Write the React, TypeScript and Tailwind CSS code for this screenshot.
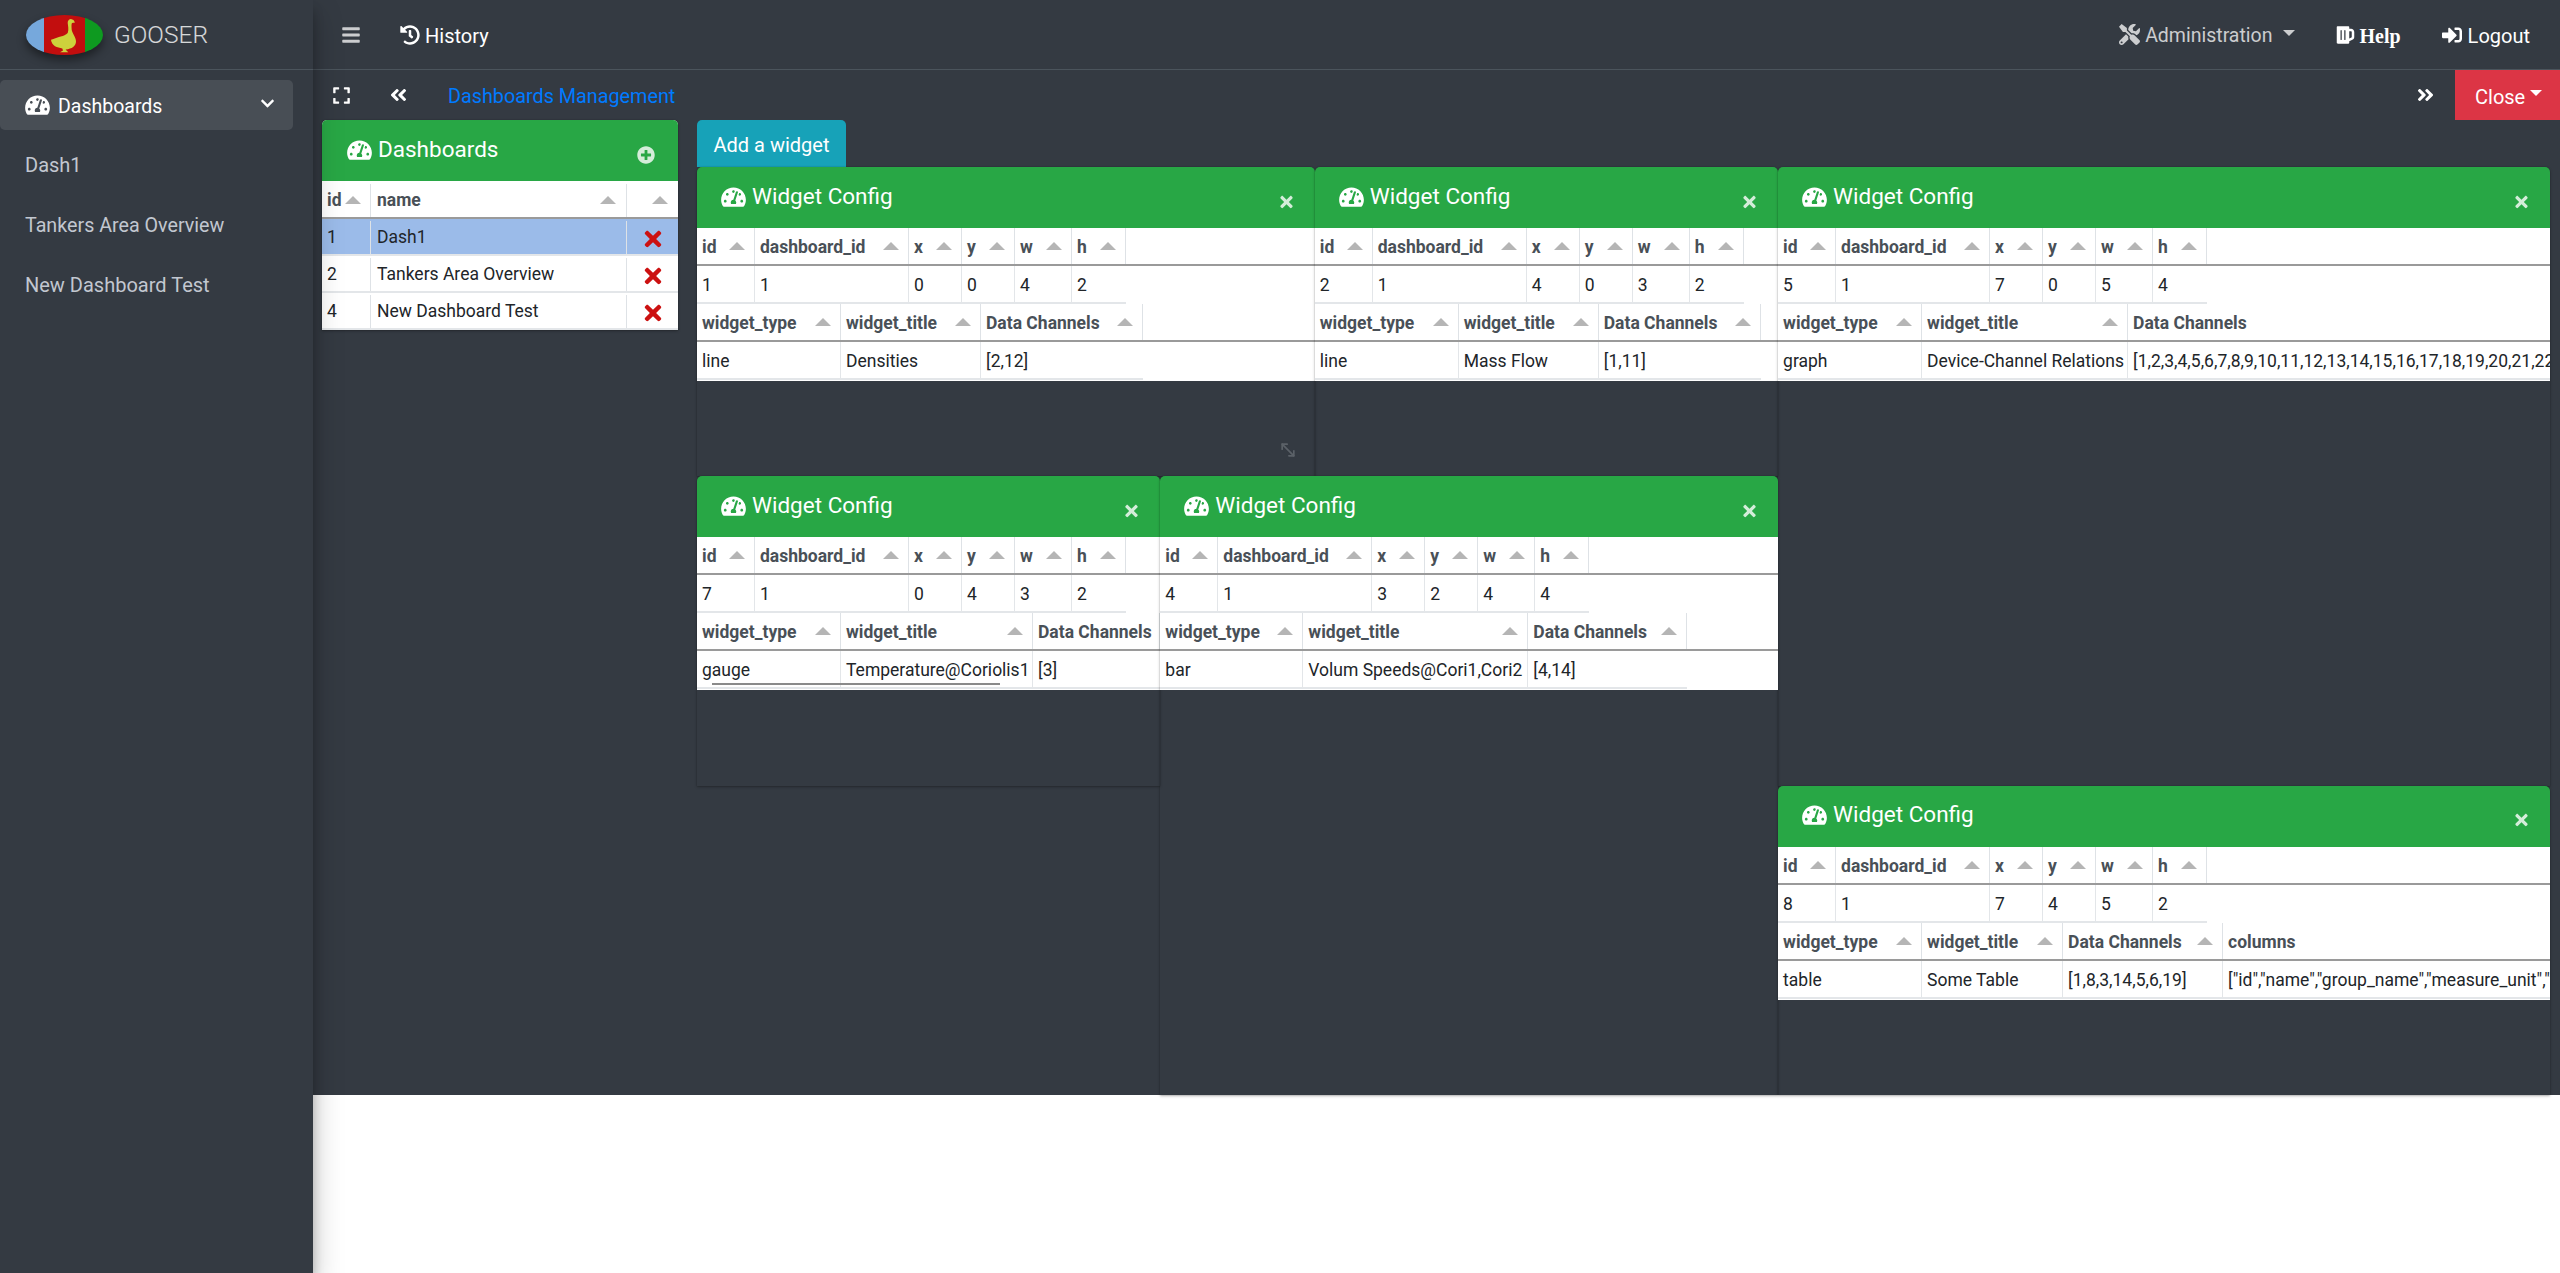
import React from 'react';
import {
  FaAngleDoubleLeft,
  FaAngleDoubleRight,
  FaBars,
  FaBeer,
  FaChevronDown,
  FaExpand,
  FaHistory,
  FaPlusCircle,
  FaSignInAlt,
  FaTachometerAlt,
  FaTimes,
  FaTools,
} from 'react-icons/fa';
import { MoveDiagonal2 } from 'lucide-react';

type Col = { label: string; value: string; w: string; noSort?: boolean };

const layoutCols = (id: string, x: string, y: string, w: string, h: string): Col[] => [
  { label: 'id', value: id, w: 'w-[58px]' },
  { label: 'dashboard_id', value: '1', w: 'w-[154px]' },
  { label: 'x', value: x, w: 'w-[53px]' },
  { label: 'y', value: y, w: 'w-[53px]' },
  { label: 'w', value: w, w: 'w-[57px]' },
  { label: 'h', value: h, w: 'w-[54px]' },
];

const ALL_CHANNELS = '[1,2,3,4,5,6,7,8,9,10,11,12,13,14,15,16,17,18,19,20,21,22,23,24,25,26]';

function SortArrow() {
  return <span className="mb-[2px] h-0 w-0 shrink-0 border-x-[8px] border-b-[8px] border-x-transparent border-b-[#b5b5b5]" />;
}

function ConfigTable({ cols }: { cols: Col[] }) {
  return (
    <div className="overflow-hidden">
      <div className="flex h-[38px] border-b-2 border-[#9a9a9a]">
        {cols.map((c) => (
          <div
            key={c.label}
            className={`${c.w} flex shrink-0 items-center justify-between overflow-hidden border-r border-[#dee2e6] pt-[2px] pl-[5px] pr-[9px] font-bold whitespace-nowrap text-[#495057]`}
          >
            <span>{c.label}</span>
            {!c.noSort && <SortArrow />}
          </div>
        ))}
      </div>
      <div className="flex h-[38px]">
        {cols.map((c) => (
          <div
            key={c.label}
            className={`${c.w} flex shrink-0 items-center overflow-hidden border-r border-b-2 border-[#e3e6e9] pt-[2px] pl-[5px] whitespace-nowrap text-[#212529] last:border-r-0`}
          >
            {c.value}
          </div>
        ))}
      </div>
    </div>
  );
}

function Widget({ className, top, bottom, children }: { className: string; top: Col[]; bottom: Col[]; children?: React.ReactNode }) {
  return (
    <div className={`${className} relative flex flex-col overflow-hidden rounded-t-[5px] shadow-[0_0_1px_rgba(0,0,0,0.4),0_1px_3px_rgba(0,0,0,0.3)]`}>
      <div className="flex h-[61px] shrink-0 items-center bg-[#28a745] pl-[24px] pr-[22px] text-white">
        <FaTachometerAlt className="mr-[6px] mb-[2px] h-[22px] w-[25px]" />
        <span className="mb-[2px] text-[22.5px]">Widget Config</span>
        <FaTimes className="mt-[8px] ml-auto h-[18px] w-[13px] opacity-80" />
      </div>
      <div className="bg-white pb-[1px] text-[17.5px]">
        <ConfigTable cols={top} />
        <ConfigTable cols={bottom} />
      </div>
      {children}
    </div>
  );
}

function GooseLogo() {
  return (
    <svg viewBox="0 0 77 40" className="h-[40px] w-[77px] drop-shadow-[0_5px_5px_rgba(0,0,0,0.45)]">
      <defs>
        <clipPath id="logo-oval">
          <ellipse cx="38.5" cy="20" rx="38.5" ry="20" />
        </clipPath>
      </defs>
      <g clipPath="url(#logo-oval)">
        <rect x="0" y="0" width="18" height="40" fill="#76a8dc" />
        <rect x="18" y="0" width="41" height="40" fill="#c20e0e" />
        <rect x="59" y="0" width="18" height="40" fill="#0e9a20" />
      </g>
      <path
        d="M45 4 C43 4 41.5 6 41.7 8 C42 11 43 14 41.7 18 C40 20 37 21 35.7 21.3 C32 22 28 24 25 24.7 C25 27 27 30 29 31.3 C31 32.5 34 33 36.3 33.5 L37 35.5 L34 37.3 L42.3 37.3 L40 35 L39.7 34.5 C46 34 50 31 50 26.3 C50 22 46 18 45.7 14.7 C45.5 12 45.3 9 46 8 L49 7.5 L47.5 5 Z"
        fill="#cdd23c"
      />
    </svg>
  );
}

function DashboardsCard() {
  const rows = [
    { id: '1', name: 'Dash1', on: true },
    { id: '2', name: 'Tankers Area Overview', on: false },
    { id: '4', name: 'New Dashboard Test', on: false },
  ];
  return (
    <div className="w-[356px] self-start overflow-hidden rounded-t-[5px] bg-white shadow-[0_0_1px_rgba(0,0,0,0.4),0_1px_3px_rgba(0,0,0,0.3)]">
      <div className="flex h-[61px] items-center bg-[#28a745] pl-[25px] pr-[23px] text-white">
        <FaTachometerAlt className="mr-[6px] mb-[2px] h-[22px] w-[25px]" />
        <span className="mb-[2px] text-[22.5px]">Dashboards</span>
        <FaPlusCircle className="mt-[8px] ml-auto h-[18px] w-[18px] opacity-80" />
      </div>
      <div className="text-[17.5px]">
        <div className="flex h-[38px] border-b-2 border-[#9a9a9a] pt-[3px] font-bold text-[#495057]">
          <div className="flex w-[49px] items-center justify-between border-r border-[#dee2e6] pl-[5px] pr-[9px]">
            id
            <SortArrow />
          </div>
          <div className="flex w-[256px] items-center justify-between border-r border-[#dee2e6] pl-[6px] pr-[10px]">
            name
            <SortArrow />
          </div>
          <div className="flex w-[51px] items-center justify-end pr-[10px]">
            <SortArrow />
          </div>
        </div>
        {rows.map((r) => (
          <div key={r.id} className={`flex h-[37px] border-b-2 border-[#e3e6e9] pt-[2px] text-[#212529] ${r.on ? 'bg-[#9bbbe9]' : ''}`}>
            <div className="flex w-[49px] items-center border-r border-[#dee2e6] pl-[5px]">{r.id}</div>
            <div className="flex w-[256px] items-center border-r border-[#dee2e6] pl-[6px]">{r.name}</div>
            <div className="flex w-[51px] items-center justify-center">
              <FaTimes className="mt-[3px] h-[24px] w-[18px] text-[#cc1111]" />
            </div>
          </div>
        ))}
      </div>
    </div>
  );
}

function Sidebar() {
  return (
    <aside className="relative z-10 h-full w-[313px] shrink-0 bg-[#343a42] shadow-[0_14px_28px_rgba(0,0,0,0.25),0_10px_10px_rgba(0,0,0,0.22)]">
      <div className="flex h-[70px] items-center border-b border-[#4b545c] pl-[26px]">
        <GooseLogo />
        <span className="ml-[11px] pt-[2px] text-[24.5px] font-light text-white/80">GOOSER</span>
      </div>
      <nav className="pt-[10px] pr-[20px] text-[#c2c7d0]">
        <div className="flex h-[50px] items-center rounded-[5px] bg-white/10 pl-[25px] pr-[18px] text-white">
          <FaTachometerAlt className="mr-[8px] h-[22px] w-[25px]" />
          <span className="pt-[4px] text-[19.5px]">Dashboards</span>
          <FaChevronDown className="mb-[3px] ml-auto h-[15px] w-[15px]" />
        </div>
        <div className="flex h-[60px] items-center pl-[25px] pt-[10px]">Dash1</div>
        <div className="flex h-[60px] items-center pl-[25px] pt-[12px] text-[19.7px]">Tankers Area Overview</div>
        <div className="flex h-[60px] items-center pl-[25px] pt-[10px]">New Dashboard Test</div>
      </nav>
    </aside>
  );
}

function TopNav() {
  return (
    <header className="flex h-[70px] items-center border-b border-[#4b545c] text-white">
      <FaBars className="ml-[29px] h-[20px] w-[18px] text-white/75" />
      <FaHistory className="ml-[40px] h-[20px] w-[20px]" />
      <span className="ml-[5px] pt-[2px]">History</span>
      <div className="ml-auto flex items-center text-white/75">
        <FaTools className="h-[21px] w-[21px]" />
        <span className="ml-[5px] pt-[3px] text-[19.5px]">Administration</span>
        <span className="mb-[4px] ml-[11px] h-0 w-0 border-x-[6px] border-t-[6px] border-x-transparent border-t-current" />
      </div>
      <FaBeer className="ml-[41px] h-[20px] w-[19px]" />
      <span className="ml-[4px] pt-[2px] font-['Liberation_Serif',serif] font-bold">Help</span>
      <FaSignInAlt className="ml-[41px] h-[20px] w-[20px]" />
      <span className="mr-[30px] ml-[6px] pt-[2px]">Logout</span>
    </header>
  );
}

function SubBar() {
  return (
    <div className="flex h-[50px] items-center text-white">
      <FaExpand className="ml-[19px] h-[19px] w-[19px]" />
      <FaAngleDoubleLeft className="ml-[39px] h-[20px] w-[17px]" />
      <a className="ml-[41px] pt-[3px] text-[19.8px] text-[#007bff]">Dashboards Management</a>
      <FaAngleDoubleRight className="ml-auto h-[20px] w-[17px]" />
      <button className="ml-[21px] flex h-[50px] w-[105px] items-center bg-[#dc3545] pl-[20px]">
        <span className="pt-[3px]">Close</span>
        <span className="mb-[4px] ml-[5px] h-0 w-0 border-x-[6px] border-t-[6px] border-x-transparent border-t-current" />
      </button>
    </div>
  );
}

export default function App() {
  return (
    <div className="flex h-[1273px] w-[2560px] overflow-hidden bg-white font-['Roboto','Liberation_Sans',sans-serif] text-[20px]">
      <Sidebar />
      <main className="min-w-0 flex-1">
        <div className="h-[1095px] bg-[#343a42]">
          <TopNav />
          <SubBar />
          <div className="flex pl-[9px]">
            <DashboardsCard />
            <div className="ml-[19px]">
              <button className="block h-[47px] w-[149px] rounded-t-[5px] bg-[#17a2b8] pt-[2px] text-[20px] text-white">Add a widget</button>

              <div className="grid grid-cols-[repeat(12,154.45px)] auto-rows-[154.67px]">
                <Widget
                  className="col-span-4 col-start-1 row-span-2 row-start-1"
                  top={layoutCols('1', '0', '0', '4', '2')}
                  bottom={[
                    { label: 'widget_type', value: 'line', w: 'w-[144px]' },
                    { label: 'widget_title', value: 'Densities', w: 'w-[140px]' },
                    { label: 'Data Channels', value: '[2,12]', w: 'w-[162px]' },
                  ]}
                >
                  <MoveDiagonal2 className="absolute right-[17px] bottom-[16px] h-[20px] w-[20px] text-[#5b6168]" />
                </Widget>
                <Widget
                  className="col-span-3 col-start-5 row-span-2 row-start-1"
                  top={layoutCols('2', '4', '0', '3', '2')}
                  bottom={[
                    { label: 'widget_type', value: 'line', w: 'w-[144px]' },
                    { label: 'widget_title', value: 'Mass Flow', w: 'w-[140px]' },
                    { label: 'Data Channels', value: '[1,11]', w: 'w-[162px]' },
                  ]}
                />
                <Widget
                  className="col-span-5 col-start-8 row-span-4 row-start-1"
                  top={layoutCols('5', '7', '0', '5', '4')}
                  bottom={[
                    { label: 'widget_type', value: 'graph', w: 'w-[144px]' },
                    { label: 'widget_title', value: 'Device-Channel Relations', w: 'w-[206px]' },
                    { label: 'Data Channels', value: ALL_CHANNELS, w: 'w-[700px]', noSort: true },
                  ]}
                />
                <Widget
                  className="col-span-3 col-start-1 row-span-2 row-start-3"
                  top={layoutCols('7', '0', '4', '3', '2')}
                  bottom={[
                    { label: 'widget_type', value: 'gauge', w: 'w-[144px]' },
                    { label: 'widget_title', value: 'Temperature@Coriolis1', w: 'w-[192px]' },
                    { label: 'Data Channels', value: '[3]', w: 'w-[127px]', noSort: true },
                  ]}
                >
                  <div className="absolute top-[207px] left-[15px] h-[2px] w-[288px] bg-[#8a8a8a]" />
                </Widget>
                <Widget
                  className="col-span-4 col-start-4 row-span-4 row-start-3"
                  top={layoutCols('4', '3', '2', '4', '4')}
                  bottom={[
                    { label: 'widget_type', value: 'bar', w: 'w-[143px]' },
                    { label: 'widget_title', value: 'Volum Speeds@Cori1,Cori2', w: 'w-[225px]' },
                    { label: 'Data Channels', value: '[4,14]', w: 'w-[159px]' },
                  ]}
                />
                <Widget
                  className="col-span-5 col-start-8 row-span-2 row-start-5"
                  top={layoutCols('8', '7', '4', '5', '2')}
                  bottom={[
                    { label: 'widget_type', value: 'table', w: 'w-[144px]' },
                    { label: 'widget_title', value: 'Some Table', w: 'w-[141px]' },
                    { label: 'Data Channels', value: '[1,8,3,14,5,6,19]', w: 'w-[160px]' },
                    { label: 'columns', value: '["id","name","group_name","measure_unit","value"]', w: 'w-[600px]', noSort: true },
                  ]}
                />
              </div>
            </div>
          </div>
        </div>
      </main>
    </div>
  );
}
